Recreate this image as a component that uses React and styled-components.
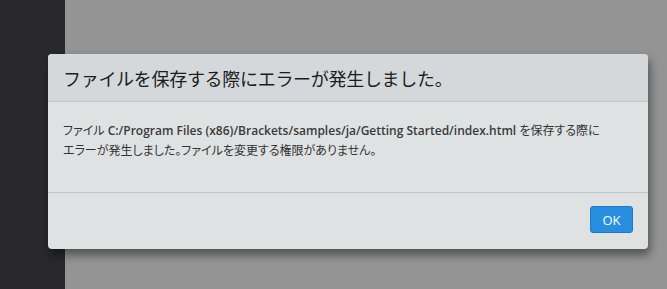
import React from 'react'
import styled, { createGlobalStyle } from 'styled-components'

const Global = createGlobalStyle`
  html, body { margin: 0; padding: 0; }
  body {
    width: 667px;
    height: 289px;
    overflow: hidden;
    font-family: "Open Sans", "Noto Sans CJK JP", sans-serif;
  }
`

const Page = styled.div`
  position: relative;
  display: flex;
  width: 667px;
  height: 289px;
`
const Sidebar = styled.div`
  width: 65px;
  background: #29292b;
`
const Backdrop = styled.div`
  flex: 1;
  background: #949494;
`
const Dialog = styled.div`
  position: absolute;
  left: 48px;
  top: 54px;
  width: 600px;
  display: flex;
  flex-direction: column;
  background: #dfe2e3;
  border-radius: 4px;
  box-shadow: 2px 6px 10px rgba(0, 0, 0, 0.45);
  overflow: hidden;
`
const Header = styled.div`
  height: 47px;
  display: flex;
  align-items: center;
  padding: 0 15px;
  background: #d5d8da;
  border-bottom: 1px solid #c3c6c8;
`
const Title = styled.h1`
  margin: 0;
  font-size: 18px;
  font-weight: normal;
  color: #1c1c1c;
  font-family: "Noto Sans CJK JP", sans-serif;
  letter-spacing: -0.3px;
`
const Body = styled.div`
  height: 91px;
  box-sizing: border-box;
  padding: 19px 15px 0;
  border-bottom: 1px solid #c3c6c8;
  font-size: 12px;
  line-height: 20px;
  color: #333;
  font-feature-settings: "palt";
`
const Path = styled.b`
  font-family: "Open Sans", sans-serif;
  font-weight: 600;
  font-size: 12px;
  color: #3a3a3a;
`
const Footer = styled.div`
  height: 56px;
  display: flex;
  justify-content: flex-end;
  align-items: flex-start;
  padding: 13px 15px 0;
  box-sizing: border-box;
`
const Button = styled.button`
  width: 43px;
  height: 27px;
  border: 1px solid #2277c4;
  border-radius: 3px;
  background: #288edf;
  color: #fff;
  font-family: "Open Sans", sans-serif;
  font-size: 13px;
  padding: 0;
`

export default function App() {
  return (
    <Page>
      <Global />
      <Sidebar />
      <Backdrop />
      <Dialog>
        <Header>
          <Title>ファイルを保存する際にエラーが発生しました。</Title>
        </Header>
        <Body>
          ファイル <Path>C:/Program Files (x86)/Brackets/samples/ja/Getting Started/index.html</Path> を保存する際に
          <br />
          エラーが発生しました。ファイルを変更する権限がありません。
        </Body>
        <Footer>
          <Button>OK</Button>
        </Footer>
      </Dialog>
    </Page>
  )
}
